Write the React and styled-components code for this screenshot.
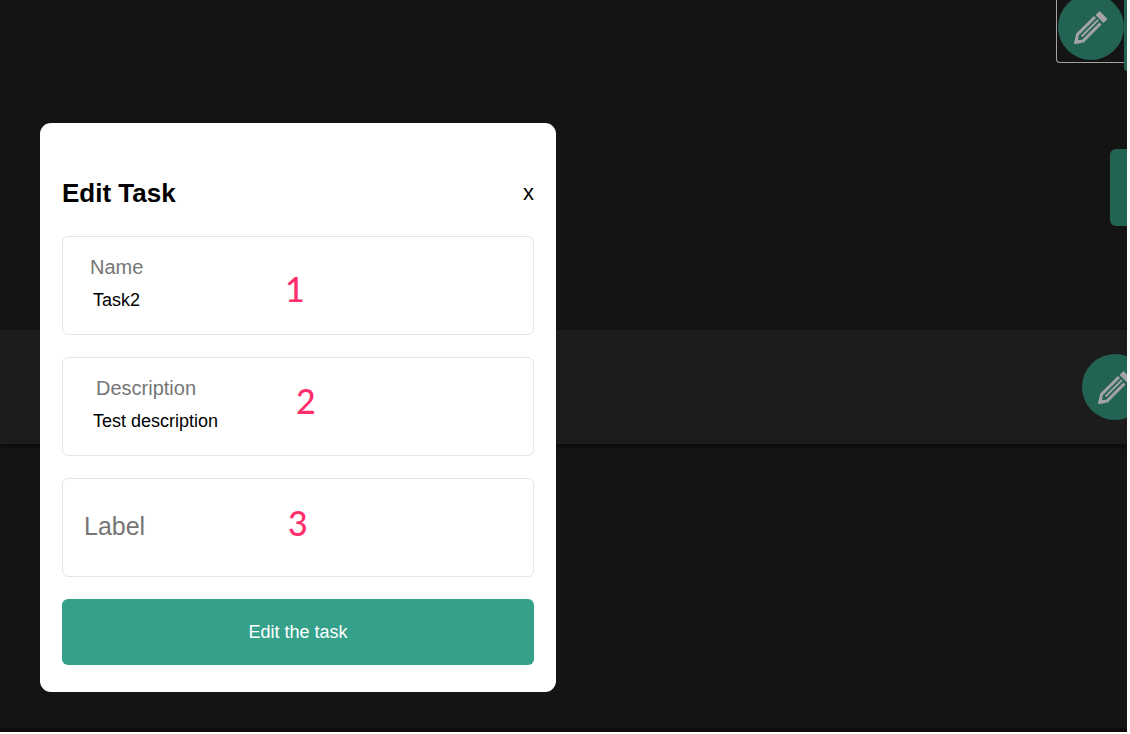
import React from "react";
import styled, { createGlobalStyle } from "styled-components";

const GlobalStyle = createGlobalStyle`
  *, *::before, *::after { box-sizing: border-box; }
  body {
    margin: 0;
    background: #fff;
    font-family: "Liberation Sans", Arial, sans-serif;
  }
`;

const Frame = styled.div`
  min-height: 100vh;
  display: flex;
  padding: 0 3px 2px 0;
`;

const Page = styled.div`
  position: relative;
  flex: 1;
  min-width: 0;
  display: flex;
  flex-direction: column;
  overflow: hidden;
  background: #141414;
  border-bottom: 4px solid #0e0c0d;
`;

const Toolbar = styled.div`
  display: flex;
  justify-content: flex-end;
  align-items: flex-start;
  height: 71px;
`;

const FocusRing = styled.div`
  display: flex;
  align-items: flex-end;
  height: 63px;
  padding: 0 0 2px 1px;
  border: 1px solid #a3a3a3;
  border-width: 0 0 1px 1px;
  border-radius: 0 0 0 4px;
`;

const RoundButton = styled.button`
  flex: none;
  width: 66px;
  height: 66px;
  margin-right: ${(p) => (p.$bleed ? "-21px" : "0")};
  padding: 0;
  border: 0;
  border-radius: 50%;
  background: #226354;
  cursor: pointer;

  svg { display: block; }
`;

const SideButton = styled.button`
  width: ${(p) => p.$width};
  height: ${(p) => p.$height};
  padding: 0;
  border: 0;
  border-radius: ${(p) => p.$radius};
  background: #226354;
`;

const SideRow = styled.div`
  display: flex;
  justify-content: flex-end;
  padding: 78px 0 104px;
`;

const TaskRow = styled.div`
  display: flex;
  justify-content: flex-end;
  padding: 24px 0;
  background: #1c1c1c;
  box-shadow: 0 3px 4px rgba(0, 0, 0, 0.4);
`;

const Dialog = styled.form`
  position: absolute;
  top: 123px;
  left: 40px;
  width: 516px;
  max-width: calc(100% - 80px);
  display: flex;
  flex-direction: column;
  gap: 22px;
  padding: 56px 22px 27px;
  border-radius: 11px;
  background: #fff;
`;

const DialogHeader = styled.header`
  display: flex;
  align-items: center;
  justify-content: space-between;
  height: 28px;
  margin-bottom: 7px;
`;

const Title = styled.h1`
  margin: 0;
  font-size: 26px;
  line-height: 28px;
  color: #000;
`;

const CloseButton = styled.button`
  padding: 0;
  border: 0;
  background: none;
  font: 22px/28px "Liberation Sans", Arial, sans-serif;
  color: #000;
  cursor: pointer;
`;

const Field = styled.div`
  position: relative;
  display: flex;
  flex-direction: ${(p) => (p.$empty ? "row" : "column")};
  align-items: ${(p) => (p.$empty ? "center" : "stretch")};
  gap: 9px;
  height: 99px;
  padding: ${(p) => (p.$empty ? "0 21px 4px" : "18px 21px")};
  border: 1px solid #e5e5e5;
  border-radius: 6px;
`;

const FieldLabel = styled.label`
  padding-left: ${(p) => p.$inset || "0"};
  font-size: ${(p) => (p.$large ? "25px" : "20px")};
  line-height: 24px;
  color: #757575;
`;

const FieldInput = styled.input`
  flex: ${(p) => (p.$grow ? "1" : "none")};
  min-width: 0;
  height: 24px;
  padding: 0 9px;
  border: 0;
  outline: 0;
  background: transparent;
  font: 18px/24px "Liberation Sans", Arial, sans-serif;
  color: #000;
`;

const Marker = styled.span`
  position: absolute;
  top: ${(p) => p.$top};
  left: ${(p) => p.$left};
  font: 500 34px/40px Lato, sans-serif;
  color: #ff2e6c;
  pointer-events: none;
`;

const SubmitButton = styled.button`
  height: 66px;
  border: 0;
  border-radius: 6px;
  background: #36a18b;
  font: 18px/24px "Liberation Sans", Arial, sans-serif;
  color: #fff;
  cursor: pointer;
`;

function Pencil() {
  return (
    <svg width="66" height="66" viewBox="0 0 66 66" fill="none" stroke="#a3a3a3" aria-hidden="true">
      <path d="M37 23 19.5 40.5 18 48 25 47 42.5 29.5" strokeWidth="3" />
      <path d="M23.5 42.5 40 26" strokeWidth="2" />
      <path d="M16 50 17.5 43 23.5 49Z" fill="#a3a3a3" stroke="none" />
      <path d="M41.5 17 49.5 25 45.5 29 37.5 21Z" fill="#a3a3a3" stroke="none" />
    </svg>
  );
}

export default function App() {
  return (
    <>
      <GlobalStyle />
      <Frame>
        <Page>
          <Toolbar>
            <FocusRing>
              <RoundButton type="button" aria-label="Edit list"><Pencil /></RoundButton>
            </FocusRing>
            <SideButton type="button" aria-label="Delete list" $width="3px" $height="71px" $radius="0 0 0 3px" />
          </Toolbar>
          <SideRow>
            <SideButton type="button" aria-label="Add task" $width="17px" $height="77px" $radius="6px 0 0 6px" />
          </SideRow>
          <TaskRow>
            <RoundButton type="button" aria-label="Edit task" $bleed><Pencil /></RoundButton>
          </TaskRow>

          <Dialog role="dialog" aria-labelledby="dialog-title" onSubmit={(e) => e.preventDefault()}>
            <DialogHeader>
              <Title id="dialog-title">Edit Task</Title>
              <CloseButton type="button" aria-label="Close">x</CloseButton>
            </DialogHeader>
            <Field>
              <FieldLabel htmlFor="name" $inset="6px">Name</FieldLabel>
              <FieldInput id="name" defaultValue="Task2" />
              <Marker $top="32px" $left="222px">1</Marker>
            </Field>
            <Field>
              <FieldLabel htmlFor="description" $inset="12px">Description</FieldLabel>
              <FieldInput id="description" defaultValue="Test description" />
              <Marker $top="23px" $left="233px">2</Marker>
            </Field>
            <Field $empty>
              <FieldLabel htmlFor="label" $large>Label</FieldLabel>
              <FieldInput id="label" $grow />
              <Marker $top="24px" $left="225px">3</Marker>
            </Field>
            <SubmitButton type="submit">Edit the task</SubmitButton>
          </Dialog>
        </Page>
      </Frame>
    </>
  );
}
